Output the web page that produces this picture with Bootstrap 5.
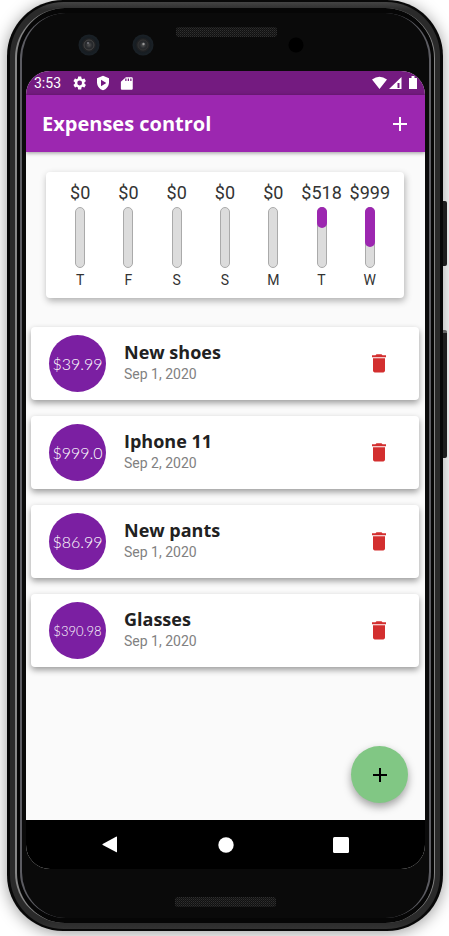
<!DOCTYPE html>
<html lang="en">
<head>
<meta charset="utf-8">
<meta name="viewport" content="width=device-width, initial-scale=1">
<title>Expenses control</title>
<link href="https://cdn.jsdelivr.net/npm/bootstrap@5.3.0/dist/css/bootstrap.min.css" rel="stylesheet">
<style>
  body { font-family: Roboto, "Liberation Sans", sans-serif; background: #fff; overflow-x: hidden; }
  svg { display: block; }

  /* handset */
  .handset { margin: 0 6px 5px 7px; padding: 2px 3px; border-radius: 56px; background: #080808; box-shadow: 0 2px 16px rgba(0,0,0,.4); }
  .rim-outer { padding: 6px 5px; border-radius: 54px; background: linear-gradient(#444, #2a2a2a 8px, #2a2a2a calc(100% - 8px), #333); }
  .rim-mid { padding: 5px 3px; border: 0 solid #858585; border-width: 0 1px 0 2px; border-radius: 50px; background: #060606; }
  .rim-inner { padding: 0 4px; border: 0 solid #5c5c62; border-width: 0 2px; border-radius: 46px; background: #0a0a0a; }
  .side-key { width: 4px; background: #1d1d1d; border-radius: 0 2px 2px 0; left: 100%; }
  .key-power { top: 201px; height: 65px; }
  .key-volume { top: 330px; height: 128px; border-top: 3px solid #666; }
  .bezel-top { height: 58px; }
  .bezel-bottom { height: 49px; padding-top: 16px; }

  /* display */
  .display { border-radius: 24px; background: #fafafa; overflow: hidden; }
  .status-bar { height: 24px; padding: 0 7px 0 8px; background: #741b80; font-size: 14px; line-height: 24px; }
  .title-bar { height: 57px; padding: 0 13px 0 16px; background: #9c27b0; box-shadow: 0 1px 4px rgba(0,0,0,.4); }
  .title-bar h1 { font: 700 20px/28px "Open Sans", sans-serif; }
  .plain { border: 0; padding: 0; background: none; }

  .surface { background: #fff; border-radius: 4px; }
  .week { margin: 20px 21px 0 20px; padding: 10px 10px 9px; box-shadow: 1px 3px 7px rgba(0,0,0,.3); color: #333; }
  .day { flex: 1 1 0; min-width: 0; }
  .day-sum { font-size: 18px; line-height: 22px; }
  .day-name { font-size: 14px; line-height: 18px; margin-top: 3px; }
  .meter { width: 10px; height: 61px; margin-top: 3px; border: 1px solid #aaa; border-radius: 6px; background: #dcdcdc; }
  .meter-fill { margin: -1px -1px 0; border-radius: 6px; background: #9c27b0; }

  .entries { margin: 29px 6px 0 5px; gap: 16px; }
  .entry { padding: 8px 28px 8px 18px; box-shadow: 0 3px 6px rgba(0,0,0,.38); }
  .amount { width: 57px; height: 57px; background: #7b1fa2; color: #fff; font: 300 16px/20px Lato, sans-serif; }
  .amount-long { font-size: 13px; }
  .entry-text { margin-left: 18px; padding-bottom: 4px; }
  .entry-text h2 { font: 700 18px/24px "Open Sans", sans-serif; color: #212121; }
  .entry-date { font-size: 14px; line-height: 20px; color: #818181; }

  .add-fab { right: 17px; bottom: 17px; width: 57px; height: 57px; background: #81c784; color: #000; box-shadow: 0 4px 8px rgba(0,0,0,.36); }
  .system-nav { height: 49px; background: #000; }
  .system-nav .plain { width: 115px; height: 49px; }
</style>
<script src="https://cdn.jsdelivr.net/npm/bootstrap@5.3.0/dist/js/bootstrap.bundle.min.js"></script>
</head>
<body class="min-vh-100 d-flex flex-column">
<svg width="0" height="0" class="position-absolute" aria-hidden="true">
  <defs>
    <symbol id="i-plus" viewBox="0 0 24 24"><path fill="currentColor" d="M19 13h-6v6h-2v-6H5v-2h6V5h2v6h6z"/></symbol>
    <symbol id="i-trash" viewBox="0 0 24 24"><path fill="#d32f2f" d="M6 18.500c0 1.100.7 1.900 1.800 1.900h8.400c1.100 0 1.800-.8 1.800-1.900V6.200H6zM19 3.200h-3.500l-1-1h-5l-1 1H5v2h14z"/></symbol>
    <pattern id="mesh" width="2" height="2" patternUnits="userSpaceOnUse"><rect width="2" height="2" fill="#111"/><rect width="1" height="1" fill="#303030"/><rect x="1" y="1" width="1" height="1" fill="#222"/></pattern>
    <radialGradient id="lens"><stop offset="0" stop-color="#555"/><stop offset=".3" stop-color="#292b2e"/><stop offset=".6" stop-color="#202123"/><stop offset=".7" stop-color="#171d22"/><stop offset="1" stop-color="#1a2127"/></radialGradient>
  </defs>
</svg>

<div class="handset position-relative flex-grow-1 d-flex flex-column">
  <div class="side-key key-power position-absolute"></div>
  <div class="side-key key-volume position-absolute"></div>
  <div class="rim-outer flex-grow-1 d-flex flex-column">
  <div class="rim-mid flex-grow-1 d-flex flex-column">
  <div class="rim-inner flex-grow-1 d-flex flex-column">

    <div class="bezel-top d-flex justify-content-center">
      <svg width="300" height="58" viewBox="76 13 300 58" aria-hidden="true">
        <circle cx="89" cy="45" r="10.500" fill="url(#lens)"/><circle cx="89" cy="45" r="5" fill="none" stroke="#444"/><circle cx="88" cy="43" r="1" fill="#77777f"/>
        <circle cx="143" cy="45" r="10.500" fill="url(#lens)"/><circle cx="143" cy="45" r="5" fill="none" stroke="#333"/><circle cx="143.500" cy="44" r="1.200" fill="#999"/>
        <rect x="176" y="27" width="101" height="10" rx="3" fill="url(#mesh)"/>
        <circle cx="296" cy="45" r="7.500" fill="#000"/>
      </svg>
    </div>

    <div class="display flex-grow-1 d-flex flex-column">
      <div class="status-bar d-flex align-items-center text-white">
        <span>3:53</span>
        <svg class="ms-2" width="20" height="16" viewBox="-3 0 28 24" aria-hidden="true"><path fill="#fff" d="M19.140 12.940c.04-.3.060-.61.060-.94 0-.32-.02-.64-.07-.94l2.030-1.580c.18-.14.230-.41.120-.61l-1.920-3.320c-.12-.22-.37-.29-.59-.22l-2.390.96c-.5-.38-1.030-.7-1.620-.94L14.400 2.810c-.04-.24-.24-.41-.48-.41h-3.840c-.24 0-.43.170-.47.410L9.250 5.350c-.59.240-1.130.57-1.620.94l-2.390-.96c-.22-.08-.47 0-.59.220L2.740 8.870c-.12.210-.08.470.120.610l2.030 1.580c-.05.3-.09.63-.09.940s.02.640.070.940l-2.030 1.580c-.18.140-.23.410-.12.610l1.920 3.320c.12.220.37.290.59.220l2.390-.96c.5.380 1.030.7 1.620.94l.36 2.540c.05.240.24.410.48.410h3.840c.24 0 .44-.17.470-.41l.36-2.540c.59-.24 1.130-.56 1.620-.94l2.390.96c.22.080.47 0 .59-.22l1.920-3.320c.12-.22.070-.47-.12-.61l-2.010-1.580zM12 15.600A3.600 3.600 0 1 1 12 8.400a3.600 3.600 0 0 1 0 7.200z"/></svg>
        <svg class="ms-1" width="18" height="16" viewBox="-3 0 27 24" aria-hidden="true"><path fill="#fff" fill-rule="evenodd" d="M12 1 3 5v6c0 5.550 3.840 10.740 9 12 5.160-1.260 9-6.450 9-12V5zM9 7l8 5-8 5z"/></svg>
        <svg class="ms-2" width="15" height="15" viewBox="0 0 24 24" aria-hidden="true"><path fill="#fff" fill-rule="evenodd" d="M20 2h-9L3 9v11c0 1.100.9 2 2 2h15c1.100 0 2-.9 2-2V4c0-1.100-.9-2-2-2zM10 4h2v4h-2zm4 0h2v4h-2zm4 0h2v4h-2z"/></svg>
        <svg class="ms-auto" width="46" height="14" viewBox="0 0 46 14" aria-hidden="true"><path fill="#fff" d="M0 3.500Q7.500-2 15 3.500L7.500 13zM17 13 29.500 1v12z"/><path fill="#741b80" d="M25.500 7h2v5h-2z"/><path fill="#fff" d="M37 2h2.500V0h3v2H45v11h-8z"/></svg>
      </div>

      <header class="title-bar d-flex align-items-center justify-content-between text-white position-relative">
        <h1 class="m-0">Expenses control</h1>
        <button type="button" class="plain text-white" aria-label="Add expense"><svg width="24" height="24"><use href="#i-plus"/></svg></button>
      </header>

      <main class="position-relative flex-grow-1">
        <section class="surface week d-flex text-center" aria-label="Spending by day">
          <div class="day d-flex flex-column align-items-center"><span class="day-sum">$0</span><div class="meter"></div><span class="day-name">T</span></div>
          <div class="day d-flex flex-column align-items-center"><span class="day-sum">$0</span><div class="meter"></div><span class="day-name">F</span></div>
          <div class="day d-flex flex-column align-items-center"><span class="day-sum">$0</span><div class="meter"></div><span class="day-name">S</span></div>
          <div class="day d-flex flex-column align-items-center"><span class="day-sum">$0</span><div class="meter"></div><span class="day-name">S</span></div>
          <div class="day d-flex flex-column align-items-center"><span class="day-sum">$0</span><div class="meter"></div><span class="day-name">M</span></div>
          <div class="day d-flex flex-column align-items-center"><span class="day-sum">$518</span><div class="meter"><div class="meter-fill" style="height:35%"></div></div><span class="day-name">T</span></div>
          <div class="day d-flex flex-column align-items-center"><span class="day-sum">$999</span><div class="meter"><div class="meter-fill" style="height:68%"></div></div><span class="day-name">W</span></div>
        </section>

        <section class="entries d-flex flex-column" aria-label="Expenses">
          <article class="surface entry d-flex align-items-center">
            <div class="amount rounded-circle d-flex align-items-center justify-content-center flex-shrink-0">$39.99</div>
            <div class="entry-text flex-grow-1"><h2 class="m-0">New shoes</h2><div class="entry-date">Sep 1, 2020</div></div>
            <button type="button" class="plain" aria-label="Delete New shoes"><svg width="24" height="24"><use href="#i-trash"/></svg></button>
          </article>
          <article class="surface entry d-flex align-items-center">
            <div class="amount rounded-circle d-flex align-items-center justify-content-center flex-shrink-0">$999.0</div>
            <div class="entry-text flex-grow-1"><h2 class="m-0">Iphone 11</h2><div class="entry-date">Sep 2, 2020</div></div>
            <button type="button" class="plain" aria-label="Delete Iphone 11"><svg width="24" height="24"><use href="#i-trash"/></svg></button>
          </article>
          <article class="surface entry d-flex align-items-center">
            <div class="amount rounded-circle d-flex align-items-center justify-content-center flex-shrink-0">$86.99</div>
            <div class="entry-text flex-grow-1"><h2 class="m-0">New pants</h2><div class="entry-date">Sep 1, 2020</div></div>
            <button type="button" class="plain" aria-label="Delete New pants"><svg width="24" height="24"><use href="#i-trash"/></svg></button>
          </article>
          <article class="surface entry d-flex align-items-center">
            <div class="amount amount-long rounded-circle d-flex align-items-center justify-content-center flex-shrink-0">$390.98</div>
            <div class="entry-text flex-grow-1"><h2 class="m-0">Glasses</h2><div class="entry-date">Sep 1, 2020</div></div>
            <button type="button" class="plain" aria-label="Delete Glasses"><svg width="24" height="24"><use href="#i-trash"/></svg></button>
          </article>
        </section>

        <button type="button" class="plain add-fab position-absolute rounded-circle d-flex align-items-center justify-content-center" aria-label="Add expense"><svg width="24" height="24"><use href="#i-plus"/></svg></button>
      </main>

      <nav class="system-nav d-flex justify-content-center" aria-label="System">
        <button type="button" class="plain d-flex align-items-center justify-content-center" aria-label="Back"><svg width="17" height="17"><path fill="#fff" d="M15 1v15q0 .5-.5.3L.7 9Q0 8.500.7 8L14.500.6q.5-.2.500.4z"/></svg></button>
        <button type="button" class="plain d-flex align-items-center justify-content-center" aria-label="Home"><svg width="16" height="16"><circle cx="8" cy="8" r="7.700" fill="#fff"/></svg></button>
        <button type="button" class="plain d-flex align-items-center justify-content-center" aria-label="Overview"><svg width="16" height="16"><rect width="16" height="16" rx="1.500" fill="#fff"/></svg></button>
      </nav>
    </div>

    <div class="bezel-bottom d-flex justify-content-center align-items-center">
      <svg width="101" height="10" viewBox="0 0 101 10" aria-hidden="true"><rect width="101" height="10" rx="3" fill="url(#mesh)"/></svg>
    </div>
  </div>
  </div>
  </div>
</div>
</body>
</html>
